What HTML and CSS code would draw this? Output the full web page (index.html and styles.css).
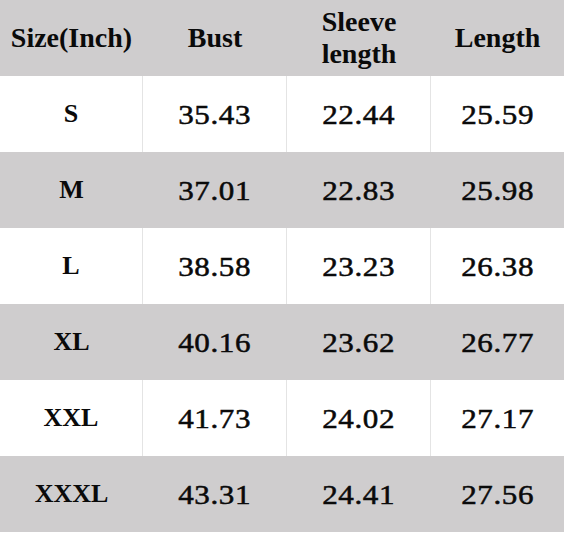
FILE: index.html
```html
<!DOCTYPE html>
<html>
<head>
<meta charset="utf-8">
<link rel="stylesheet" href="styles.css">
</head>
<body>
<div class="chart">
  <div class="row head">
    <div class="cell">Size(Inch)</div>
    <div class="cell">Bust</div>
    <div class="cell two">Sleeve<br>length</div>
    <div class="cell">Length</div>
  </div>
  <div class="row light">
    <div class="cell size">S</div><div class="cell num"><span>35.43</span></div><div class="cell num"><span>22.44</span></div><div class="cell num"><span>25.59</span></div>
  </div>
  <div class="row dark">
    <div class="cell size">M</div><div class="cell num"><span>37.01</span></div><div class="cell num"><span>22.83</span></div><div class="cell num"><span>25.98</span></div>
  </div>
  <div class="row light">
    <div class="cell size">L</div><div class="cell num"><span>38.58</span></div><div class="cell num"><span>23.23</span></div><div class="cell num"><span>26.38</span></div>
  </div>
  <div class="row dark">
    <div class="cell size">XL</div><div class="cell num"><span>40.16</span></div><div class="cell num"><span>23.62</span></div><div class="cell num"><span>26.77</span></div>
  </div>
  <div class="row light">
    <div class="cell size">XXL</div><div class="cell num"><span>41.73</span></div><div class="cell num"><span>24.02</span></div><div class="cell num"><span>27.17</span></div>
  </div>
  <div class="row dark">
    <div class="cell size">XXXL</div><div class="cell num"><span>43.31</span></div><div class="cell num"><span>24.41</span></div><div class="cell num"><span>27.56</span></div>
  </div>
</div>
</body>
</html>
```
FILE: styles.css
```css
html, body {
  margin: 0;
  padding: 0;
  background: #ffffff;
}
.chart {
  width: 564px;
  display: flex;
  flex-direction: column;
}
.row {
  display: grid;
  grid-template-columns: 143px 144px 144px 133px;
  height: 76px;
}
.cell {
  display: flex;
  align-items: center;
  justify-content: center;
  text-align: center;
  color: #0a0a0a;
}
.head {
  background: #cfcdce;
  height: 76px;
}
.head .cell {
  font-family: "Liberation Serif", serif;
  font-weight: bold;
  font-size: 28px;
  line-height: 32px;
}
.light {
  background: #ffffff;
}
.light .cell {
  border-right: 1px solid #e4e4e4;
}
.light .cell:last-child {
  border-right: none;
}
.dark {
  background: #cfcdce;
}
.size {
  font-family: "Liberation Serif", serif;
  font-weight: bold;
  font-size: 26px;
}
.num {
  font-family: "Liberation Serif", serif;
  font-size: 27px;
  padding-top: 2px;
}
.num span {
  display: inline-block;
  transform: scaleX(1.15);
  letter-spacing: 0.5px;
  -webkit-text-stroke: 0.5px #0a0a0a;
}
```
